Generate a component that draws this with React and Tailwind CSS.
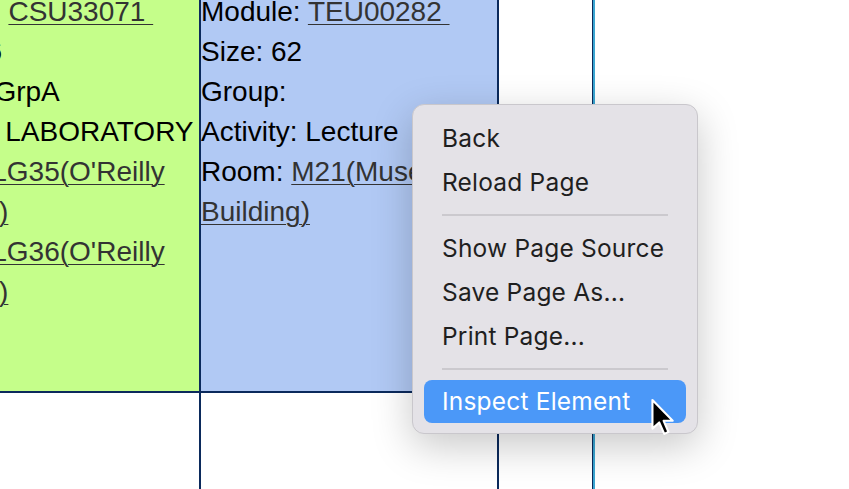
import React from 'react';

const greenLines = [
  { label: 'Module: ', link: 'CSU33071\u00a0' },
  { label: 'Size: 36' },
  { label: 'Group: GrpA' },
  { label: 'Activity: LABORATORY' },
  { label: 'Room: ', link: "LG35(O'Reilly" },
  { link: 'Institute)' },
  { label: 'Room: ', link: "LG36(O'Reilly" },
  { link: 'Institute)' },
];

const blueLines = [
  { label: 'Module: ', link: 'TEU00282\u00a0' },
  { label: 'Size: 62' },
  { label: 'Group: ' },
  { label: 'Activity: Lecture' },
  { label: 'Room: ', link: 'M21(Museum' },
  { link: 'Building)' },
];

const CellLines = ({ lines }) => (
  <div className="flex flex-col">
    {lines.map((line, i) => (
      <div key={i} className="h-[40px] leading-[40px] whitespace-nowrap">
        {line.label}
        {line.link && (
          <a href="#" className="text-[#333333] underline decoration-1 underline-offset-[3px]">
            {line.link}
          </a>
        )}
      </div>
    ))}
  </div>
);

const MenuItem = ({ children, active }) => (
  <div
    className={
      active
        ? 'h-[43px] mx-[11px] px-[18px] flex items-center rounded-[8px] bg-[#4b98f8] text-white'
        : 'h-[44px] mx-[11px] px-[18px] flex items-center text-[#1f1f1f]'
    }
  >
    {children}
  </div>
);

const Separator = () => (
  <div className="h-[22px] flex items-center px-[29px]">
    <div className="h-[2px] w-full bg-[#cbc9ce]" />
  </div>
);

const Cursor = () => (
  <svg width="26" height="38" viewBox="0 0 12 18" className="absolute left-[650px] top-[398px]">
    <path
      d="M1 1 L1 14.5 L4.2 11.6 L6.6 17 L8.6 16.1 L6.3 10.8 L10.6 10.8 Z"
      fill="#000"
      stroke="#fff"
      strokeWidth="1"
      strokeLinejoin="round"
    />
  </svg>
);

export default function App() {
  return (
    <div className="relative w-[849px] h-[489px] overflow-hidden bg-white text-black text-[28px] font-['Liberation_Sans',Arial,sans-serif]">
      <div className="flex h-full">
        <div className="w-[199px] shrink-0 flex flex-col">
          <div className="h-[391px] bg-[#c5fe8a] overflow-hidden">
            <div className="ml-[-99px] mt-[-8px]">
              <CellLines lines={greenLines} />
            </div>
          </div>
          <div className="h-[2px] bg-[#0b2a5c]" />
        </div>
        <div className="w-[2px] bg-[#0b2a5c]" />
        <div className="w-[296px] shrink-0 flex flex-col">
          <div className="h-[391px] bg-[#b1c9f4] overflow-hidden">
            <div className="mt-[-8px]">
              <CellLines lines={blueLines} />
            </div>
          </div>
          <div className="h-[2px] bg-[#0b2a5c]" />
        </div>
        <div className="w-[2px] bg-[#0b2a5c]" />
        <div className="w-[93px] shrink-0 flex flex-col">
          <div className="h-[391px]" />
          <div className="h-[2px] bg-[#0b2a5c]" />
        </div>
        <div className="w-[1px] bg-[#0b2a5c]" />
        <div className="w-[2px] bg-[#3aa6d2]" />
        <div className="flex-1" />
      </div>

      <div className="absolute left-[412px] top-[104px] w-[286px] h-[330px] rounded-[12px] border border-[#c9c7cc] bg-[#e4e2e7] pt-[11px] shadow-[0_12px_40px_rgba(0,0,0,0.22)] text-[24.5px] font-['Inter','Noto_Sans',sans-serif] tracking-[0.2px]">
        <MenuItem>Back</MenuItem>
        <MenuItem>Reload Page</MenuItem>
        <Separator />
        <MenuItem>Show Page Source</MenuItem>
        <MenuItem>Save Page As...</MenuItem>
        <MenuItem>Print Page...</MenuItem>
        <Separator />
        <MenuItem active>Inspect Element</MenuItem>
      </div>
      <Cursor />
    </div>
  );
}
